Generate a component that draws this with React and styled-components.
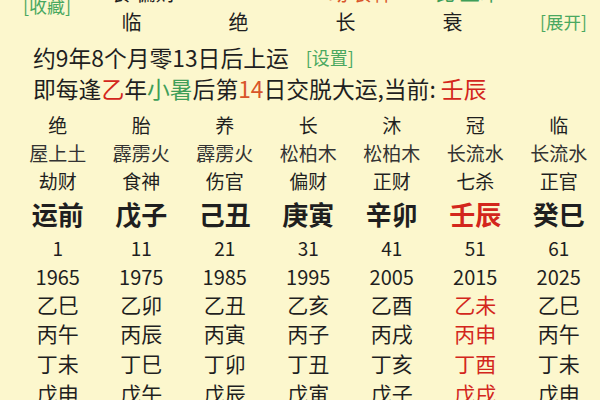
import React from 'react'
import styled, { createGlobalStyle } from 'styled-components'

const GlobalStyle = createGlobalStyle`
  html, body {
    margin: 0;
    padding: 0;
    background: #fcf7cd;
    overflow: hidden;
  }
  body {
    font-family: "Noto Sans CJK SC", "Noto Sans", sans-serif;
    color: #1f1f1f;
  }
`

const Page = styled.div`
  width: 600px;
  height: 400px;
  overflow: hidden;
  background: #fcf7cd;
`

const Inner = styled.div`
  margin-top: -14px;
`

const Header = styled.div`
  display: flex;
  align-items: flex-start;
`

const SideLabel = styled.div`
  width: 78px;
  padding-left: 23px;
  box-sizing: border-box;
  margin-top: 7px;
  font-size: 18px;
  line-height: 24px;
  color: #4aa860;
  white-space: nowrap;
`

const PillarGrid = styled.div`
  display: grid;
  grid-template-columns: repeat(4, 107px);
  grid-template-rows: 23px 26px;
  align-items: start;
`

const PillarCell = styled.div`
  text-align: center;
  font-size: 20px;
  line-height: ${p => (p.$top ? 13 : 26)}px;
  white-space: nowrap;
  color: ${p => p.$color || '#1f1f1f'};
  padding-left: ${p => p.$shift || 0}px;
`

const ExpandLabel = styled.div`
  margin-top: 23px;
  margin-left: 34px;
  font-size: 17.5px;
  line-height: 26px;
  color: #4aa860;
  white-space: nowrap;
`

const InfoLine = styled.div`
  display: flex;
  align-items: center;
  padding-left: 33px;
  font-size: 22.8px;
  line-height: 31px;
  white-space: nowrap;
  margin-top: ${p => p.$top || 0}px;
`

const Hl = styled.span`
  color: ${p => p.$c};
`

const SetLink = styled.span`
  margin-left: 17px;
  font-size: 18px;
  color: #4aa860;
`

const LuckGrid = styled.div`
  margin-top: 7px;
  margin-left: 16px;
  display: grid;
  grid-template-columns: repeat(7, 83.5px);
  grid-template-rows: 27px 28px 28px 38px 30px 28px 28px 30px 30px 30px;
`

const Cell = styled.div`
  display: flex;
  align-items: center;
  justify-content: center;
  white-space: nowrap;
  font-size: ${p => p.$size}px;
  font-weight: ${p => (p.$bold ? 700 : 400)};
  color: ${p => (p.$red ? '#d3261c' : p.$soft ? '#333' : '#1f1f1f')};
`

const RED = '#d3261c'
const GREEN = '#3f9e58'

const rows = [
  { size: 19, items: ['绝', '胎', '养', '长', '沐', '冠', '临'] },
  { size: 19, soft: true, items: ['屋上土', '霹雳火', '霹雳火', '松柏木', '松柏木', '长流水', '长流水'] },
  { size: 19, items: ['劫财', '食神', '伤官', '偏财', '正财', '七杀', '正官'] },
  { size: 26, bold: true, redCol: true, items: ['运前', '戊子', '己丑', '庚寅', '辛卯', '壬辰', '癸巳'] },
  { size: 19, items: ['1', '11', '21', '31', '41', '51', '61'] },
  { size: 20, items: ['1965', '1975', '1985', '1995', '2005', '2015', '2025'] },
  { size: 21, redCol: true, items: ['乙巳', '乙卯', '乙丑', '乙亥', '乙酉', '乙未', '乙巳'] },
  { size: 21, redCol: true, items: ['丙午', '丙辰', '丙寅', '丙子', '丙戌', '丙申', '丙午'] },
  { size: 21, redCol: true, items: ['丁未', '丁巳', '丁卯', '丁丑', '丁亥', '丁酉', '丁未'] },
  { size: 21, redCol: true, items: ['戊申', '戊午', '戊辰', '戊寅', '戊子', '戊戌', '戊申'] },
]

const topRow = [
  { text: '食 偏财', color: '#1f1f1f', shift: 24 },
  { text: '', color: '#1f1f1f' },
  { text: '劫 食神', color: '#d8552a', shift: 30 },
  { text: '比 正印', color: GREEN, shift: 30 },
]

const pillarStates = ['临', '绝', '长', '衰']

export default function App() {
  return (
    <Page>
      <GlobalStyle />
      <Inner>
        <Header>
          <SideLabel>[收藏]</SideLabel>
          <PillarGrid>
            {topRow.map((t, i) => (
              <PillarCell key={'t' + i} $top $color={t.color} $shift={t.shift}>{t.text}</PillarCell>
            ))}
            {pillarStates.map((s, i) => (
              <PillarCell key={'s' + i}>{s}</PillarCell>
            ))}
          </PillarGrid>
          <ExpandLabel>[展开]</ExpandLabel>
        </Header>

        <InfoLine $top={7}>
          约9年8个月零13日后上运
          <SetLink>[设置]</SetLink>
        </InfoLine>
        <InfoLine>
          即每逢<Hl $c={RED}>乙</Hl>年<Hl $c={GREEN}>小暑</Hl>后第<Hl $c="#d8552a">14</Hl>日交脱大运,当前:&nbsp;<Hl $c={RED}>壬辰</Hl>
        </InfoLine>

        <LuckGrid>
          {rows.map((r, ri) =>
            r.items.map((it, ci) => (
              <Cell
                key={ri + '-' + ci}
                $size={r.size}
                $bold={r.bold}
                $soft={r.soft}
                $red={r.redCol && ci === 5}
              >
                {it}
              </Cell>
            ))
          )}
        </LuckGrid>
      </Inner>
    </Page>
  )
}
